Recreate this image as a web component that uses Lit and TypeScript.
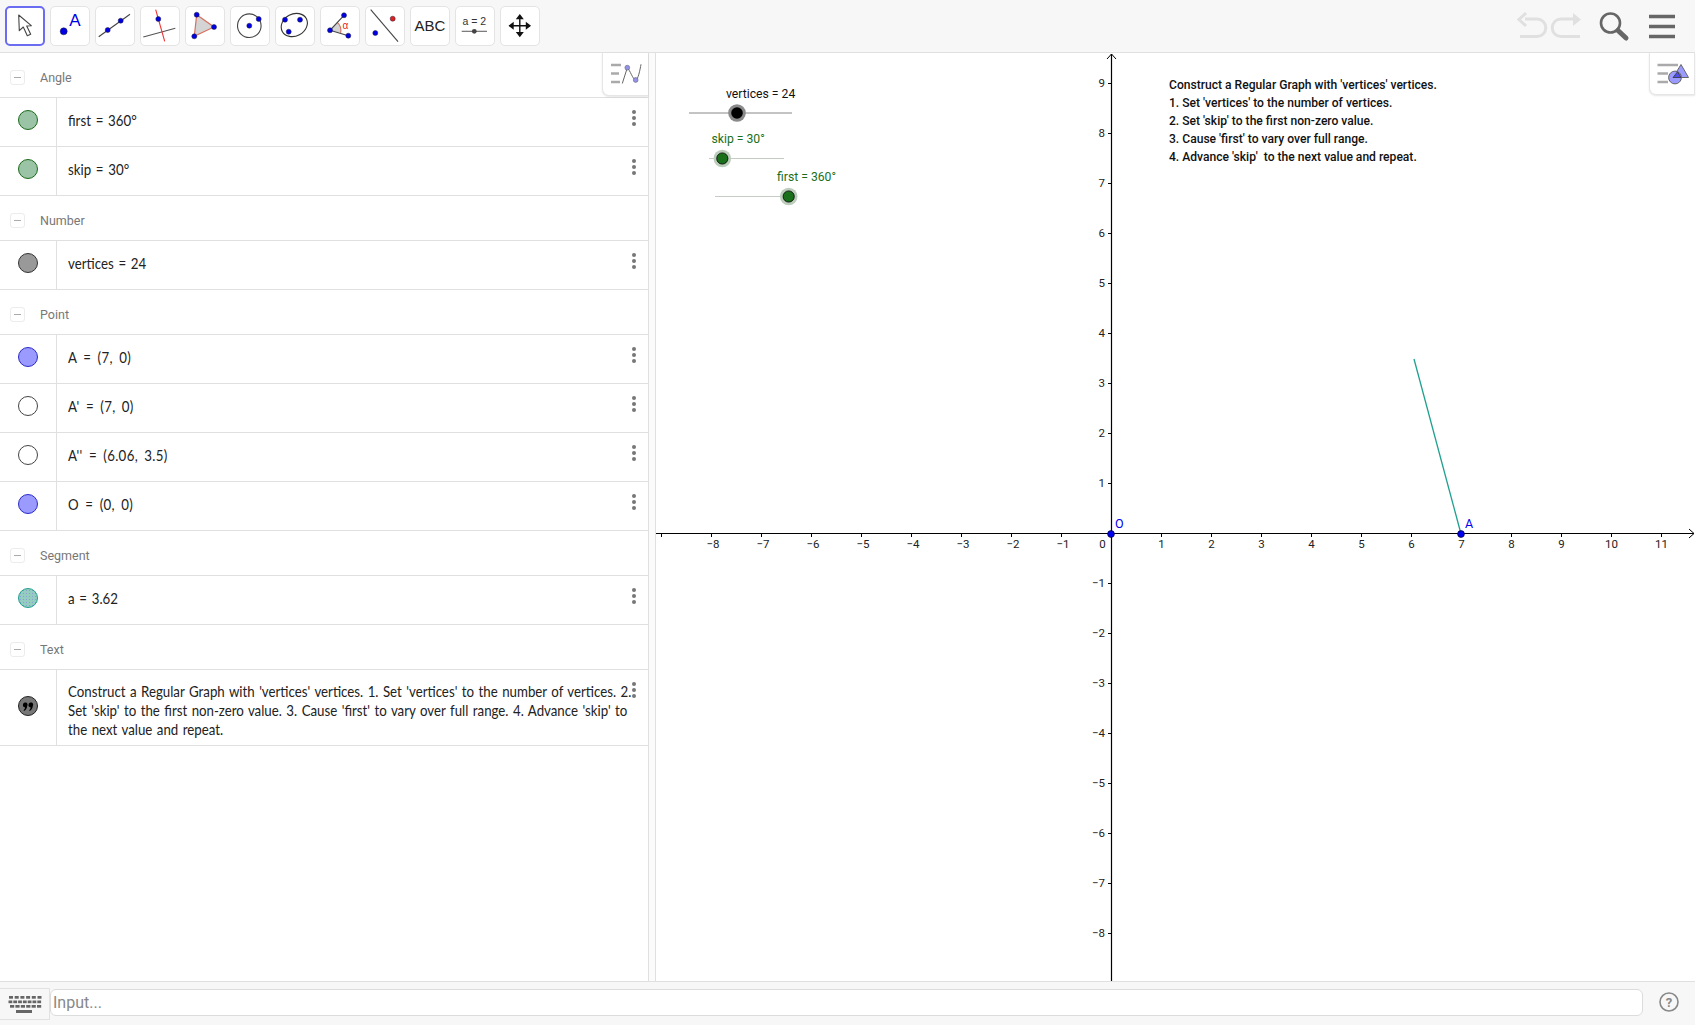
import { LitElement, html, css, svg } from "lit";
import { customElement } from "lit/decorators.js";

const pt = (x: number, y: number, r = 2.5, f = "#0000e6") =>
  svg`<circle cx=${x} cy=${y} r=${r} fill=${f} stroke="#223" stroke-width=".5"></circle>`;

const toolIcons = [
  svg`<path d="M13.7 9 14.3 24.7 18.3 21 22.3 29.7 25.7 28.3 21.7 20 26.3 19.7Z" fill="#fff" stroke="#444" stroke-width="1.1" stroke-linejoin="round"></path>`,
  svg`${pt(13.7, 25.3, 3.5)}<text x="25" y="20" text-anchor="middle" font-size="17" fill="#0000e6" font-family="Liberation Sans, sans-serif">A</text>`,
  svg`<path d="M3.7 30.7 35 8.3" stroke="#444" stroke-width="1.1"></path>${pt(12.7, 24)}${pt(25.7, 14.7)}`,
  svg`<path d="M3.3 31 35.3 22.3" stroke="#555" stroke-width="1.1"></path><path d="M15.7 3.7 24.7 35.3" stroke="#e33" stroke-width="1.1"></path>${pt(18.3, 13)}`,
  svg`<path d="M11.7 8.7 29 21 9.3 30.3Z" fill="#d4d4d4" stroke="#d8705f" stroke-width="1.2"></path>${pt(11.7, 8.7)}${pt(29, 21)}${pt(9.3, 30.3)}`,
  svg`<circle cx="19.3" cy="19.7" r="11.8" fill="none" stroke="#444" stroke-width="1.1"></circle>${pt(19.3, 19.7)}${pt(28.7, 13)}`,
  svg`<ellipse cx="19.3" cy="19" rx="13.6" ry="11" transform="rotate(-28 19.3 19)" fill="none" stroke="#333" stroke-width="1.1"></ellipse>${pt(10, 13.7)}${pt(25, 13.7)}${pt(13.7, 25.7)}`,
  svg`<path d="M10 24.3 17.3 16.3A11 11 0 0 1 20.6 26.8Z" fill="#d4d4d4"></path><path d="M17.3 16.3A11 11 0 0 1 20.6 26.8" fill="none" stroke="#d8705f" stroke-width="1.1"></path><path d="M24 9.3 10 24.3 28.3 29.7" fill="none" stroke="#444" stroke-width="1.1"></path>${pt(10, 24.3)}${pt(24, 9.3)}${pt(28.3, 29.7)}<text x="25.3" y="22.5" text-anchor="middle" font-size="10" fill="#e22" font-family="Liberation Sans, sans-serif">α</text>`,
  svg`<path d="M5.7 3.7 33 35.7" stroke="#444" stroke-width="1.1"></path>${pt(10.3, 27)}${pt(27.7, 12.7, 2.5, "#e02020")}`,
  svg`<text x="20" y="25" text-anchor="middle" font-size="15" fill="#222" font-family="Liberation Sans, sans-serif">ABC</text>`,
  svg`<text x="19.3" y="18.6" text-anchor="middle" font-size="10.5" fill="#333" font-family="Liberation Sans, sans-serif">a = 2</text><path d="M6.7 25.3H32" stroke="#666" stroke-width="1.1"></path><circle cx="19.3" cy="25.3" r="2.4" fill="#444"></circle>`,
  svg`<path d="M9.5 19.8H30.1M19.8 9.5V30.1" stroke="#111" stroke-width="1.4"></path><path d="M19.8 8 15.8 13.2H23.8ZM19.8 31.2 15.8 26H23.8ZM8.5 19.8 13.7 15.8V23.8ZM31 19.8 25.8 15.8V23.8Z" fill="#111"></path>`,
];

const groups: { name: string; items: { t: string; m: string }[] }[] = [
  { name: "Angle", items: [{ t: "first = 360°", m: "ang" }, { t: "skip = 30°", m: "ang" }] },
  { name: "Number", items: [{ t: "vertices = 24", m: "num" }] },
  {
    name: "Point",
    items: [
      { t: "A = (7, 0)", m: "pnt" },
      { t: "A' = (7, 0)", m: "hol" },
      { t: "A'' = (6.06, 3.5)", m: "hol" },
      { t: "O = (0, 0)", m: "pnt" },
    ],
  },
  { name: "Segment", items: [{ t: "a = 3.62", m: "seg" }] },
];

const range = (a: number, b: number) => Array.from({ length: b - a + 1 }, (_, i) => a + i);
const OX = 1111;
const OY = 533;
const U = 50;
const num = (n: number) => (n < 0 ? "\u2212" + -n : String(n));

@customElement("app-root")
export class AppRoot extends LitElement {
  static styles = css`
    :host {
      display: flex;
      flex-direction: column;
      height: 100vh;
      box-sizing: border-box;
      padding: 0 1px 1px 0;
      background: #fff;
      font-family: "Roboto", sans-serif;
      overflow: hidden;
    }
    .toolbar {
      height: 53px;
      box-sizing: border-box;
      flex: none;
      background: #f7f7f7;
      border-bottom: 1px solid #e0e0e0;
      display: flex;
      align-items: flex-start;
      padding: 6px 0 0 5px;
      gap: 5px;
    }
    .tool {
      width: 40px;
      height: 40px;
      box-sizing: border-box;
      background: #fff;
      border: 1px solid #e4e4e4;
      border-radius: 5px;
      position: relative;
    }
    .tool.sel {
      border: 2px solid #6a6cf2;
    }
    .tool svg {
      position: absolute;
      left: -1px;
      top: -1px;
      width: 40px;
      height: 40px;
    }
    .tool.sel svg {
      left: -2px;
      top: -2px;
    }
    .tool-right {
      margin-left: auto;
      width: 178px;
      height: 52px;
      margin-top: -6px;
    }
    .tool-right svg {
      display: block;
    }
    .main {
      flex: 1;
      min-height: 0;
      display: flex;
    }
    .algebra {
      width: 649px;
      box-sizing: border-box;
      border-right: 1px solid #e0e0e0;
      flex: none;
      position: relative;
    }
    .divider {
      width: 6px;
      flex: none;
      background: #fbfbfb;
      border-right: 1px solid #e0e0e0;
    }
    .style-btn {
      position: absolute;
      background: #fff;
      border-left: 1px solid #e6e6e6;
      border-bottom: 1px solid #e6e6e6;
      border-bottom-left-radius: 7px;
      box-shadow: 0 1px 2px rgba(0, 0, 0, 0.1);
    }
    .style-alg {
      right: 0;
      top: 0;
      width: 45px;
      height: 42px;
    }
    .graphics {
      flex: 1;
      position: relative;
      min-width: 0;
    }
    .graphics > svg {
      display: block;
      width: 100%;
      height: 100%;
    }
    .graphics text {
      white-space: pre;
    }
    .style-gfx {
      right: 0;
      top: 0;
      width: 46px;
      height: 42px;
      border-right: 1px solid #e6e6e6;
      box-sizing: border-box;
    }
    .head {
      height: 45px;
      box-sizing: border-box;
      border-bottom: 1px solid #e0e0e0;
      display: flex;
      align-items: center;
      padding: 4px 0 0 10px;
      color: #777;
      font-size: 12.5px;
    }
    .minus {
      width: 15px;
      height: 15px;
      box-sizing: border-box;
      border: 1px solid #ececec;
      border-radius: 3px;
      margin-right: 15px;
      display: flex;
      align-items: center;
      justify-content: center;
    }
    .minus i {
      display: block;
      width: 7px;
      height: 1px;
      background: #aaa;
    }
    .row {
      height: 49px;
      box-sizing: border-box;
      border-bottom: 1px solid #e0e0e0;
      display: flex;
      position: relative;
    }
    .row.tall {
      height: 76px;
    }
    .mcol {
      width: 57px;
      box-sizing: border-box;
      flex: none;
      border-right: 1px solid #e0e0e0;
      display: flex;
      align-items: center;
      padding: 0 0 4px 18px;
    }
    .marble {
      width: 20px;
      height: 20px;
      box-sizing: border-box;
      border-radius: 50%;
      border: 1px solid #333;
    }
    .marble.ang {
      background: #9ac4a5 radial-gradient(circle, #7fae8c 35%, transparent 40%) 0 0 / 2px 2px;
      border-color: #1a6b1a;
    }
    .marble.num {
      background: #999;
      border-color: #333;
    }
    .marble.pnt {
      background: #9a9aff;
      border-color: #2a2ac8;
    }
    .marble.hol {
      background: #fff;
      border-color: #444;
    }
    .marble.seg {
      background: #94cdbf radial-gradient(circle, #8a9fd8 35%, transparent 40%) 0 0 / 3px 3px;
      border-color: #1f9f8e;
    }
    .marble.txt {
      background: #777;
      border-color: #222;
      display: flex;
    }
    .marble.txt svg {
      width: 18px;
      height: 18px;
    }
    .formula {
      font-family: "Lato", sans-serif;
      font-size: 15px;
      word-spacing: 1.5px;
      color: #222;
      padding: 0 0 5px 11px;
      display: flex;
      align-items: center;
    }
    .formula.coord {
      word-spacing: 3px;
      letter-spacing: 0.35px;
    }
    .formula span {
      display: inline-block;
      transform: scaleX(0.885);
      transform-origin: left center;
      white-space: nowrap;
    }
    .formula.long {
      display: block;
      padding: 12px 0 0 11px;
      line-height: 19px;
      word-spacing: 1.2px;
    }
    .kebab {
      position: absolute;
      top: 12px;
      right: 12px;
      display: flex;
      flex-direction: column;
      gap: 2.2px;
    }
    .kebab i {
      display: block;
      width: 4px;
      height: 4px;
      border-radius: 50%;
      background: #777;
    }
    .bar {
      height: 44px;
      box-sizing: border-box;
      flex: none;
      border-top: 1px solid #e0e0e0;
      background: #f7f7f7;
      display: flex;
      align-items: flex-start;
      padding-top: 6px;
    }
    .kbd {
      width: 50px;
      height: 32px;
      box-sizing: border-box;
      border: 1px solid #e2e2e2;
      border-left: none;
      display: flex;
      align-items: center;
      justify-content: center;
      flex: none;
    }
    .input {
      width: 1593px;
      height: 27px;
      margin-top: 1px;
      box-sizing: border-box;
      background: #fff;
      border: 1px solid #dcdcdc;
      border-radius: 6px;
      color: #888;
      font-size: 16px;
      line-height: 26px;
      padding-left: 2px;
      flex: none;
    }
    .help {
      margin: 4px 0 0 16px;
      flex: none;
    }
  `;

  private row(t: string, m: string) {
    const coord = m === "pnt" || m === "hol";
    return html`<div class="row">
      <div class="mcol"><div class="marble ${m}"></div></div>
      <div class="formula ${coord ? "coord" : ""}"><span>${t}</span></div>
      <div class="kebab"><i></i><i></i><i></i></div>
    </div>`;
  }

  private head(name: string) {
    return html`<div class="head"><div class="minus"><i></i></div>${name}</div>`;
  }

  private graph() {
    const green = "#1a6f1a";
    return svg`<svg viewBox="656 53 1039 928" xmlns="http://www.w3.org/2000/svg" font-family="Roboto, sans-serif">
      <path d="M656 533.5H1694M1111.5 54V981" stroke="#000" stroke-width="1.2" fill="none"></path>
      <path d="M1689 529 1694 533.5 1689 538M1107 59 1111.5 54 1116 59" stroke="#000" stroke-width="1" fill="none"></path>
      <path d="M${OX - 9 * U + 0.5} 533V537" stroke="#000" stroke-width="1"></path>
      ${range(-8, 11).filter((n) => n !== 0).map((n) => svg`
        <path d="M${OX + n * U + 0.5} 533V537" stroke="#000" stroke-width="1"></path>
        <text x=${OX + n * U + (n < 0 ? 2 : 0.5)} y="547.5" text-anchor="middle" font-size="11.5" fill="#222">${num(n)}</text>`)}
      <text x="1102.5" y="547.5" text-anchor="middle" font-size="11.5" fill="#222">0</text>
      ${range(-8, 9).filter((n) => n !== 0).map((n) => svg`
        <path d="M1108 ${OY - n * U + 0.5}H1112" stroke="#000" stroke-width="1"></path>
        <text x="1105" y=${OY - n * U + 4} text-anchor="end" font-size="11.5" fill="#222">${num(n)}</text>`)}
      <path d="M1414 359 1460.5 532" stroke="#1fa08e" stroke-width="1.3"></path>
      <circle cx="1111" cy="534" r="3.4" fill="#0000f0" stroke="#003" stroke-width=".7"></circle>
      <circle cx="1461" cy="534" r="3.4" fill="#0000f0" stroke="#003" stroke-width=".7"></circle>
      <text x="1115" y="528" font-size="12.5" fill="#0000f0">O</text>
      <text x="1465" y="528" font-size="12.5" fill="#0000f0">A</text>

      <path d="M689 113H792" stroke="#888" stroke-width="1"></path>
      <circle cx="737" cy="113" r="8.8" fill="#8a8a8a"></circle>
      <circle cx="737" cy="113" r="5.8" fill="#000"></circle>
      <text x="726" y="98" font-size="12.2" fill="#111">vertices = 24</text>

      <path d="M709 158.5H784" stroke="#c4ccc4" stroke-width="1"></path>
      <circle cx="722.3" cy="158.5" r="8.8" fill="#bccdbc"></circle>
      <circle cx="722.3" cy="158.5" r="5.6" fill=${green} stroke="#000" stroke-width=".8"></circle>
      <text x="711.5" y="143" font-size="12.2" fill=${green}>skip = 30°</text>

      <path d="M715 196.5H789" stroke="#c4ccc4" stroke-width="1"></path>
      <circle cx="788.7" cy="196.5" r="8.8" fill="#bccdbc"></circle>
      <circle cx="788.7" cy="196.5" r="5.6" fill=${green} stroke="#000" stroke-width=".8"></circle>
      <text x="777" y="181" font-size="12.2" fill=${green}>first = 360°</text>

      <g font-size="12.1" font-weight="500" fill="#111">
        <text x="1169" y="89">Construct a Regular Graph with 'vertices' vertices.</text>
        <text x="1169" y="107">1. Set 'vertices' to the number of vertices.</text>
        <text x="1169" y="125">2. Set 'skip' to the first non-zero value.</text>
        <text x="1169" y="143">3. Cause 'first' to vary over full range.</text>
        <text x="1169" y="161">4. Advance 'skip'  to the next value and repeat.</text>
      </g>
    </svg>`;
  }

  render() {
    return html`
      <div class="toolbar">
        ${toolIcons.map(
          (ic, i) => html`<div class="tool ${i === 0 ? "sel" : ""}"><svg viewBox="0 0 40 40">${ic}</svg></div>`
        )}
        <div class="tool-right">
          <svg width="178" height="52" viewBox="1517 0 178 52">
            <path d="M1525 19H1537A7.5 7.5 0 0 1 1537 36.5H1520M1526 13 1519 19.5 1526 26" fill="none" stroke="#e0e0e0" stroke-width="3"></path>
            <path d="M1573 19H1561A7.5 7.5 0 0 0 1561 36.5H1580" fill="none" stroke="#e0e0e0" stroke-width="3"></path>
            <path d="M1573 13 1581 19.5 1573 26Z" fill="#e0e0e0"></path>
            <circle cx="1610.5" cy="23" r="9.5" fill="none" stroke="#666" stroke-width="2.6"></circle>
            <path d="M1618 30.5 1626 38" stroke="#666" stroke-width="5" stroke-linecap="round"></path>
            <path d="M1649 16.5H1675M1649 26.5H1675M1649 36.5H1675" stroke="#666" stroke-width="3.4"></path>
          </svg>
        </div>
      </div>
      <div class="main">
        <div class="algebra">
          ${groups.map(
            (g) => html`${this.head(g.name)}${g.items.map((it) => this.row(it.t, it.m))}`
          )}
          ${this.head("Text")}
          <div class="row tall">
            <div class="mcol">
              <div class="marble txt">
                <svg viewBox="0 0 18 18"><path d="M4 7.5A2.3 2.3 0 1 1 8.2 9C8 11.5 6.8 13 5 14L4.6 13.2C5.5 12.5 6 11.6 6.1 10.4A2.4 2.4 0 0 1 4 7.5ZM9.6 7.5A2.3 2.3 0 1 1 13.8 9C13.6 11.5 12.4 13 10.6 14L10.2 13.2C11.1 12.5 11.6 11.6 11.7 10.4A2.4 2.4 0 0 1 9.6 7.5Z" fill="#000"></path></svg>
              </div>
            </div>
            <div class="formula long">
              <span>Construct a Regular Graph with 'vertices' vertices. 1. Set 'vertices' to the number of vertices. 2.<br />
              Set 'skip' to the first non-zero value. 3. Cause 'first' to vary over full range. 4. Advance 'skip' to<br />
              the next value and repeat.</span>
            </div>
            <div class="kebab"><i></i><i></i><i></i></div>
          </div>
          <div class="style-btn style-alg">
            <svg width="45" height="42" viewBox="603 53 45 42">
              <path d="M611 65H621M611 73.5H619M611 82H620" stroke="#aaa" stroke-width="2.6"></path>
              <path d="M622.3 83.5 627.3 67.7C630 70 633 80 635.7 80 638 80 640 70 641 64.3" fill="none" stroke="#666" stroke-width="1"></path>
              <circle cx="627.3" cy="67.7" r="2.4" fill="#9292ea" stroke="#667" stroke-width=".6"></circle>
              <circle cx="635.7" cy="80" r="2.4" fill="#9292ea" stroke="#667" stroke-width=".6"></circle>
            </svg>
          </div>
        </div>
        <div class="divider"></div>
        <div class="graphics">
          ${this.graph()}
          <div class="style-btn style-gfx">
            <svg width="45" height="42" viewBox="1649 53 45 42">
              <path d="M1656.5 65H1677M1656.5 73.5H1667M1656.5 82H1667" stroke="#aaa" stroke-width="2.6"></path>
              <path d="M1680 64.5 1687.5 77.5H1672Z" fill="#9a9aff" stroke="#666" stroke-width="1"></path>
              <circle cx="1674" cy="77.5" r="6.4" fill="#9a9aff" stroke="#666" stroke-width="1"></circle>
              <path d="M1676.5 71.8 1680 77.5H1672Z" fill="#5050ee" stroke="#333" stroke-width=".8"></path>
            </svg>
          </div>
        </div>
      </div>
      <div class="bar">
        <div class="kbd">
          <svg width="34" height="20" viewBox="9 994 34 20">
            <g fill="#666">
              ${range(0, 5).map((i) => svg`<rect x=${10 + i * 5.7} y="996" width="4" height="2.7"></rect>`)}
              ${range(0, 6).map((i) => svg`<rect x=${9.5 + i * 4.8} y="1000.5" width="3.8" height="2.7"></rect>`)}
              ${range(0, 5).map((i) => svg`<rect x=${11 + i * 5.4} y="1005" width="4.2" height="2.7"></rect>`)}
              <rect x="17" y="1010" width="16" height="3"></rect>
            </g>
          </svg>
        </div>
        <div class="input">Input...</div>
        <svg class="help" width="20" height="20" viewBox="0 0 20 20">
          <circle cx="10" cy="10" r="9" fill="none" stroke="#888" stroke-width="1.6"></circle>
          <text x="10" y="14.6" text-anchor="middle" font-size="13" font-weight="700" fill="#888" font-family="Roboto, sans-serif">?</text>
        </svg>
      </div>
    `;
  }
}
